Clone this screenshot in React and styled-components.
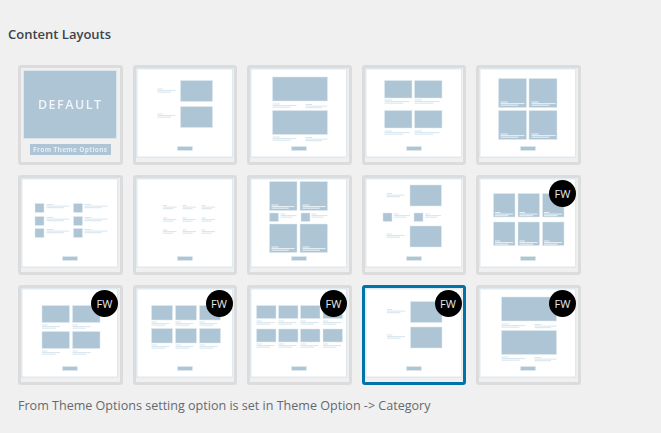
import React from "react";
import styled, { createGlobalStyle } from "styled-components";

const GlobalStyle = createGlobalStyle`
  body {
    margin: 0;
    background: #f0f0f0;
    font-family: "Open Sans", "Liberation Sans", sans-serif;
  }
`;

const Page = styled.div`
  padding: 25px 0 0 8px;
`;
const Title = styled.h2`
  margin: 0 0 22px;
  font-size: 13px;
  line-height: 18px;
  font-weight: 600;
  color: #3c434a;
`;
const Grid = styled.div`
  display: grid;
  grid-template-columns: repeat(5, 104.5px);
  grid-auto-rows: 100px;
  gap: 10px;
  margin-left: 10px;
`;
const Tile = styled.div`
  position: relative;
  box-sizing: border-box;
  border: 3.5px solid ${(p) => (p.$selected ? "#0073aa" : "#dcdcdc")};
  border-radius: 3px;
  background: #f0f0f0;
`;
const Thumb = styled.svg`
  display: block;
  width: 97.5px;
  height: 93px;
  filter: blur(0.45px);
`;
const Badge = styled.span`
  position: absolute;
  top: 1.5px;
  right: 1.5px;
  width: 27px;
  height: 27px;
  border-radius: 50%;
  background: #000;
  color: #e8e8e8;
  font-size: 11px;
  line-height: 27px;
  text-align: center;
`;
const DefaultThumb = styled.div`
  display: flex;
  flex-direction: column;
  align-items: center;
  padding-top: 1.5px;
  filter: blur(0.3px);
`;
const DefaultBlock = styled.div`
  width: 94px;
  height: 69px;
  background: #adc5d5;
  border: 0.5px solid #dbe6ed;
  box-sizing: border-box;
  color: #f2f6f9;
  font-size: 12.5px;
  font-weight: 600;
  letter-spacing: 1.5px;
  line-height: 67px;
  text-align: center;
`;
const DefaultLabel = styled.div`
  width: 81px;
  height: 11.5px;
  margin-top: 5px;
  background: #adc5d5;
  color: #e6eef3;
  font-size: 6.5px;
  font-weight: 700;
  letter-spacing: 0.35px;
  line-height: 11.5px;
  text-align: center;
`;
const Note = styled.p`
  margin: 12px 0 0 10px;
  font-size: 12.55px;
  line-height: 17px;
  color: #646970;
`;

// a small heading dash with two text dashes under it
const caption = (x, y, w, light) =>
  [
    [x, y, w * 0.3],
    [x, y + 1.6, w],
    [x, y + 3.2, w * 0.75],
  ].map((l) => [...l, light]);

const BTN = [[45, 82, 15, 4]];

const layouts = [
  null,
  {
    blocks: [[48, 16, 32, 21], [48, 42, 32, 21]],
    lines: [...caption(25, 24, 18), ...caption(25, 49, 18)],
  },
  {
    blocks: [[26, 12.5, 55, 24], [26, 46, 55, 24]],
    lines: [...caption(26, 39, 24), ...caption(59, 39.5, 22), ...caption(26, 72, 24), ...caption(59, 72.5, 22)],
  },
  {
    blocks: [[23, 16, 27.5, 17.5], [53, 16, 27.5, 17.5], [23, 46, 27.5, 17.5], [53, 46, 27.5, 17.5]],
    lines: [...caption(23, 35, 25), ...caption(53, 35, 25), ...caption(23, 66, 25), ...caption(53, 66, 25)],
  },
  {
    blocks: [[23, 14, 28, 29], [53.5, 14, 28, 29], [23, 46, 28, 29], [53.5, 46, 28, 29]],
    lines: [...caption(25, 37, 24, true), ...caption(56, 37, 24, true), ...caption(25, 69, 24, true), ...caption(56, 69, 24, true)],
  },
  {
    blocks: [29, 42, 54].flatMap((y) => [[17.5, y, 9, 9], [56, y, 9, 9]]),
    lines: [29.5, 42.5, 54.5].flatMap((y) => [...caption(29, y, 23), ...caption(67, y, 23)]),
  },
  {
    blocks: [],
    lines: [30.5, 43, 55].flatMap((y) => [...caption(30.5, y, 13.5), ...caption(50, y, 13.5), ...caption(69, y, 13.5)]),
  },
  {
    blocks: [[23, 7, 27.5, 29], [53.5, 7, 27.5, 29], [23, 38.5, 9, 8.5], [54.5, 38.5, 9, 8.5], [23, 49.5, 27.5, 28.5], [53.5, 49.5, 27.5, 28.5]],
    lines: [
      ...caption(25, 30, 23, true),
      ...caption(56, 30, 23, true),
      ...caption(34, 39, 16),
      ...caption(65, 39, 16),
      ...caption(25, 72, 23, true),
      ...caption(56, 72, 23, true),
    ],
  },
  {
    blocks: [[48.5, 10.5, 31.5, 21], [21.5, 38.5, 9, 8.5], [52.5, 38.5, 9, 8.5], [48.5, 51.5, 31.5, 21]],
    lines: [...caption(25, 18.5, 18), ...caption(32.5, 39, 16), ...caption(63.5, 39, 16), ...caption(25, 59, 18)],
  },
  {
    blocks: [19, 47.5].flatMap((y) => [[18, y, 21.5, 23.5], [42.5, y, 21.5, 23.5], [67, y, 21.5, 23.5]]),
    lines: [37.5, 66].flatMap((y) => [...caption(19.5, y, 18, true), ...caption(44, y, 18, true), ...caption(68.5, y, 18, true)]),
  },
  {
    blocks: [[24.5, 21, 27.5, 17], [55, 21, 27.5, 17], [24.5, 47, 27.5, 17], [55, 47, 27.5, 17]],
    lines: [...caption(24.5, 40, 18), ...caption(55, 40, 18), ...caption(24.5, 66, 18), ...caption(55, 66, 18)],
  },
  {
    blocks: [21, 44].flatMap((y) => [[19, y, 21, 14.5], [43, y, 21, 14.5], [67, y, 21, 14.5]]),
    lines: [37, 60].flatMap((y) => [...caption(19, y, 18), ...caption(43, y, 18), ...caption(67, y, 18)]),
  },
  {
    blocks: [21, 44.5].flatMap((y) => [[10, y, 19.5, 13], [32, y, 19.5, 13], [54, y, 19.5, 13], [76.5, y, 19.5, 13]]),
    lines: [36, 59].flatMap((y) => [...caption(10, y, 18), ...caption(32, y, 18), ...caption(54, y, 18), ...caption(76.5, y, 18)]),
  },
  {
    blocks: [[49, 17, 31.5, 21], [49, 42.5, 31.5, 21]],
    lines: [...caption(25.5, 24.5, 18), ...caption(25.5, 50, 18)],
    selected: true,
  },
  {
    blocks: [[26, 12.5, 55, 24], [26, 46, 55, 24]],
    lines: [...caption(26, 39, 24), ...caption(59, 39.5, 22), ...caption(26, 72, 24), ...caption(59, 72.5, 22)],
  },
];

// the last six layouts carry the full width badge
const FW_FROM = 9;

function LayoutThumb({ layout }) {
  return (
    <Thumb viewBox="3.5 3.5 97.5 93">
      <rect x="3.5" y="3.5" width="97.5" height="90" fill="#dfe9f0" />
      <rect x="5" y="5" width="94.5" height="87" fill="#fff" />
      {[...layout.blocks, ...BTN].map(([x, y, w, h], i) => (
        <rect key={i} x={x} y={y} width={w} height={h} fill="#adc5d5" stroke="#e0eaf0" strokeWidth="0.5" />
      ))}
      {layout.lines.map(([x, y, w, light], i) => (
        <rect key={i} x={x} y={y} width={w} height="1" fill={light ? "#eaf1f5" : "#d8e5ed"} />
      ))}
    </Thumb>
  );
}

function App() {
  return (
    <Page>
      <GlobalStyle />
      <Title>Content Layouts</Title>
      <Grid>
        {layouts.map((layout, i) => (
          <Tile key={i} $selected={layout && layout.selected}>
            {layout ? (
              <LayoutThumb layout={layout} />
            ) : (
              <DefaultThumb>
                <DefaultBlock>DEFAULT</DefaultBlock>
                <DefaultLabel>From Theme Options</DefaultLabel>
              </DefaultThumb>
            )}
            {i >= FW_FROM && <Badge>FW</Badge>}
          </Tile>
        ))}
      </Grid>
      <Note>From Theme Options setting option is set in Theme Option -&gt; Category</Note>
    </Page>
  );
}

export default App;
